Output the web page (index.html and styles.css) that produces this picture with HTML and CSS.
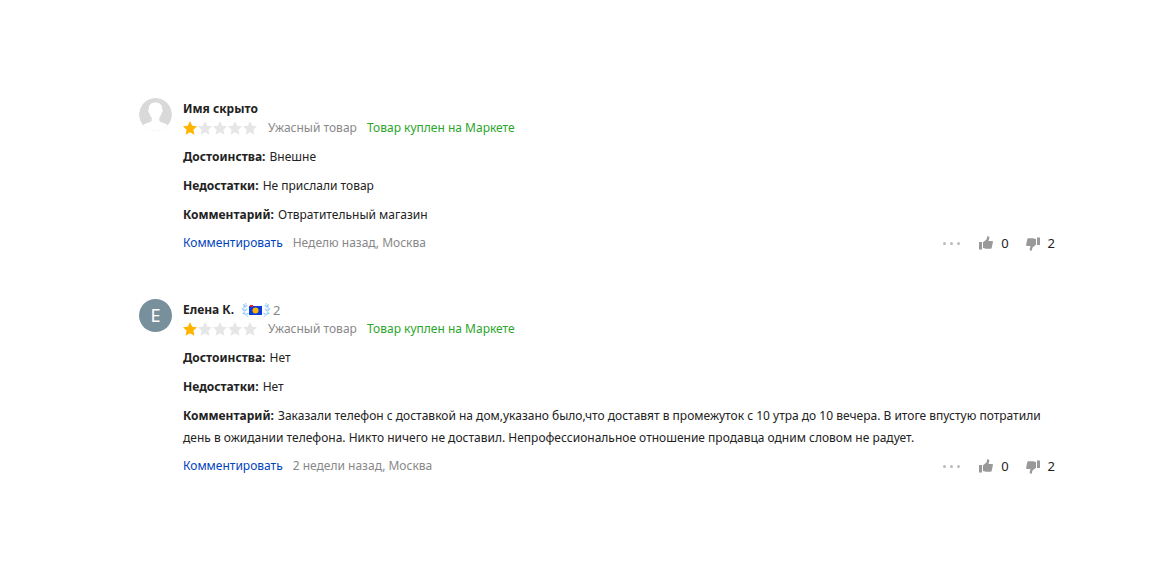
FILE: index.html
```html
<!DOCTYPE html>
<html lang="ru">
<head>
  <meta charset="UTF-8">
  <meta name="viewport" content="width=device-width, initial-scale=1.0">
  <title>Отзывы о товаре</title>
  <link rel="stylesheet" href="styles.css">
</head>
<body>
  <!-- shared icons -->
  <svg class="sprite" aria-hidden="true">
    <symbol id="star" viewBox="0 0 15 14">
      <path d="M7 0l2.200 4.700 4.800.6-3.600 3.400 1 5L7 11.200l-4.400 2.500 1-5L0 5.300l4.800-.6z"/>
    </symbol>
    <symbol id="thumb" viewBox="0 0 14 14">
      <path d="M0 6h3v7.500H0zM4 6.200L7.500 3.600 8.300.3c1.400-.3 2.300.6 2 1.900L9.500 5H13c.7 0 1 .5.9 1.200l-1.200 5.500c-.2.800-.6 1.100-1.300 1.100H7L4 12z"/>
    </symbol>
  </svg>

  <main class="reviews">
    <article class="review">
      <svg class="avatar" viewBox="0 0 33 33" role="img" aria-label="Имя скрыто">
        <clipPath id="round"><circle cx="16.500" cy="16.500" r="16.500"/></clipPath>
        <g clip-path="url(#round)">
          <rect width="33" height="33" fill="#d9d9d9"/>
          <path fill="#fff" d="M16.500 4.500c4.900 0 6.900 2.800 6.600 6.800 1 .4.800 3-.5 3.600-.4 2.400-1.300 3.700-2.300 4.600v2.700c0 1.200 1.200 1.700 3 2.200 3 .9 5.200 1.600 6 3.600v6H3.700v-6c.8-2 3-2.700 6-3.600 1.800-.5 3-1 3-2.200v-2.700c-1-.9-1.900-2.200-2.300-4.600-1.300-.6-1.500-3.200-.5-3.600-.3-4 1.700-6.800 6.600-6.800z"/>
        </g>
      </svg>
      <div class="content">
        <h2 class="author">Имя скрыто</h2>
        <div class="rating">
          <span class="stars" role="img" aria-label="1 из 5">
            <svg class="star full"><use href="#star"/></svg>
            <svg class="star"><use href="#star"/></svg>
            <svg class="star"><use href="#star"/></svg>
            <svg class="star"><use href="#star"/></svg>
            <svg class="star"><use href="#star"/></svg>
          </span>
          <span class="grade">Ужасный товар</span>
          <span class="bought">Товар куплен на Маркете</span>
        </div>
        <p><b>Достоинства:</b> Внешне</p>
        <p><b>Недостатки:</b> Не прислали товар</p>
        <p><b>Комментарий:</b> Отвратительный магазин</p>
        <div class="bottom">
          <a href="#comment">Комментировать</a>
          <span class="date">Неделю назад, Москва</span>
          <button class="more" aria-label="Ещё"><i></i><i></i><i></i></button>
          <button class="vote"><svg class="thumb"><use href="#thumb"/></svg>0</button>
          <button class="vote"><svg class="thumb down"><use href="#thumb"/></svg>2</button>
        </div>
      </div>
    </article>

    <article class="review">
      <div class="avatar letter">E</div>
      <div class="content">
        <h2 class="author">Елена К.
          <svg class="badge" viewBox="0 0 30 16" aria-hidden="true">
            <g fill="none" stroke="#9fd2f9">
              <path d="M5 1C1.500 5 2 12 7.500 15M25 1c3.500 4 3 11-2.500 14"/>
              <path stroke-width="1.500" d="M2.500 2.500L4 5M.8 6.500l2.400 2M1.500 11l3 1M6 3L4 5.500M6 7L3.800 9M7.500 11l-2.200 1.500M27.500 2.500L26 5M29.200 6.500l-2.400 2M28.500 11l-3 1M24 3l2 2.500M24 7l2.200 2M22.500 11l2.200 1.500"/>
            </g>
            <path fill="#0a3cdc" d="M8 4h13v9H8z"/>
            <path fill="#e8202c" d="M9 3h3v2H9z"/>
            <circle cx="14.500" cy="8.500" r="3" fill="#ffb400"/>
          </svg>
          <span class="count">2</span>
        </h2>
        <div class="rating">
          <span class="stars" role="img" aria-label="1 из 5">
            <svg class="star full"><use href="#star"/></svg>
            <svg class="star"><use href="#star"/></svg>
            <svg class="star"><use href="#star"/></svg>
            <svg class="star"><use href="#star"/></svg>
            <svg class="star"><use href="#star"/></svg>
          </span>
          <span class="grade">Ужасный товар</span>
          <span class="bought">Товар куплен на Маркете</span>
        </div>
        <p><b>Достоинства:</b> Нет</p>
        <p><b>Недостатки:</b> Нет</p>
        <p><b>Комментарий:</b> Заказали телефон с доставкой на дом,указано было,что доставят в промежуток с 10 утра до 10 вечера. В итоге впустую потратили день в ожидании телефона. Никто ничего не доставил. Непрофессиональное отношение продавца одним словом не радует.</p>
        <div class="bottom">
          <a href="#comment">Комментировать</a>
          <span class="date">2 недели назад, Москва</span>
          <button class="more" aria-label="Ещё"><i></i><i></i><i></i></button>
          <button class="vote"><svg class="thumb"><use href="#thumb"/></svg>0</button>
          <button class="vote"><svg class="thumb down"><use href="#thumb"/></svg>2</button>
        </div>
      </div>
    </article>
  </main>
</body>
</html>
```
FILE: styles.css
```css
body {
  margin: 0;
  background: #fff;
  color: #222;
  font-family: "Noto Sans", sans-serif;
  font-size: 12px;
  line-height: 22px;
}
.sprite {
  display: none;
}
.reviews {
  padding: 98px 118px 40px 139px;
}
.review {
  display: flex;
  gap: 11px;
  margin-bottom: 46px;
}
.avatar {
  flex: none;
  width: 33px;
  height: 33px;
  border-radius: 50%;
}
.letter {
  background: #78909c;
  color: #fff;
  font-size: 18px;
  line-height: 33px;
  text-align: center;
}
.content {
  flex: 1;
}
.author {
  display: flex;
  align-items: center;
  margin: 0;
  font-size: 12px;
  line-height: 22px;
}
.badge {
  width: 30px;
  height: 16px;
  margin: 0 2px 0 7px;
}
.count {
  color: #888;
  font-size: 13px;
  font-weight: normal;
}
.rating {
  display: flex;
  align-items: center;
  gap: 10px;
  line-height: 16px;
  margin-bottom: 10px;
}
.stars {
  display: flex;
}
.star {
  width: 15px;
  height: 14px;
  fill: #e6e6e6;
}
.full {
  fill: #ffb400;
}
.grade, .date {
  color: #888;
}
.bought {
  color: #2ba52b;
}
p {
  margin: 0 0 7px;
}
b {
  margin-right: 1px;
}
.bottom {
  display: flex;
  align-items: center;
  line-height: 20px;
}
.bottom a {
  color: #04b;
  text-decoration: none;
}
.date {
  margin-left: 10px;
}
button {
  display: flex;
  align-items: center;
  padding: 0;
  border: 0;
  background: none;
  color: #222;
  font: inherit;
  cursor: pointer;
}
.more {
  gap: 4px;
  margin-left: auto;
  margin-right: 2px;
}
.more i {
  width: 3px;
  height: 3px;
  border-radius: 50%;
  background: #bbb;
}
.vote {
  gap: 8px;
  margin-left: 17px;
  font-size: 13px;
}
.thumb {
  width: 14px;
  height: 14px;
  fill: #999;
}
.down {
  margin-top: 2px;
  transform: rotate(180deg);
}
```
